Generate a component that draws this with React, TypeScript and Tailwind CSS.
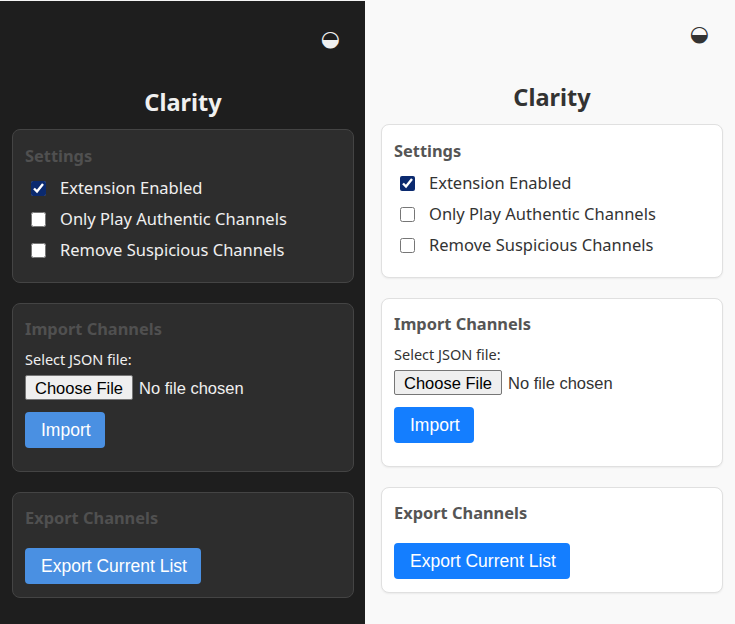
const themes = {
  dark: {
    page: 'bg-[#1e1e1e] pt-[24px] w-[365px] pl-[12px] pr-[11px] border-t border-[#f5f5f5]',
    icon: 'text-[#f0f0f0]',
    title: 'text-[#f0f0f0]',
    card: 'bg-[#2d2d2d] border-[#444444]',
    heading: 'text-[#505050]',
    text: 'text-[#f0f0f0]',
    button: 'bg-[#4a90e2]',
  },
  light: {
    page: 'bg-[#f9f9f9] pt-[20px] flex-1 pl-[16px] pr-[12px]',
    icon: 'text-[#333333]',
    title: 'text-[#333333]',
    card: 'bg-white border-[#e0e0e0] shadow-[0_1px_2px_rgba(0,0,0,0.06)]',
    heading: 'text-[#555555]',
    text: 'text-[#333333]',
    button: 'bg-[#147eff]',
  },
};

const settings = [
  { label: 'Extension Enabled', checked: true },
  { label: 'Only Play Authentic Channels', checked: false },
  { label: 'Remove Suspicious Channels', checked: false },
];

const Panel = ({ mode }: { mode: 'dark' | 'light' }) => {
  const t = themes[mode];
  const card = `rounded-lg border px-3 ${t.card}`;
  const heading = `text-[16.4px] leading-[24px] font-bold font-['Noto_Sans',sans-serif] ${t.heading}`;
  const button = `block h-[36px] rounded-[4px] pl-4 pr-[14px] text-[17.5px] text-white font-['Liberation_Sans',sans-serif] ${t.button}`;

  return (
    <div className={t.page}>
      <div className="flex justify-end pr-[14px] h-[28px] items-center">
        <span className={`text-[22px] leading-none font-['DejaVu_Sans',sans-serif] ${t.icon}`}>◒</span>
      </div>
      <h1 className={`mt-[31px] text-center text-[23.5px] leading-[36px] font-bold font-['Noto_Sans',sans-serif] ${t.title}`}>
        Clarity
      </h1>
      <div className={`mt-[9px] h-[154px] pt-[14px] ${card}`}>
        <h2 className={heading}>Settings</h2>
        <div className="mt-[5px]">
          {settings.map((s) => (
            <label key={s.label} className="flex h-[31px] items-center">
              <input type="checkbox" defaultChecked={s.checked} className="ml-[6px] mr-[14px] h-[15px] w-[15px] accent-[#0b2a6f]" />
              <span className={`text-[16.5px] font-['Noto_Sans',sans-serif] ${t.text}`}>{s.label}</span>
            </label>
          ))}
        </div>
      </div>
      <div className={`mt-[20px] h-[169px] pt-[13px] ${card}`}>
        <h2 className={heading}>Import Channels</h2>
        <div className={`mt-[8px] text-[14.5px] leading-[20px] font-['Noto_Sans',sans-serif] ${t.text}`}>Select JSON file:</div>
        <input
          type="file"
          className={`mt-[6px] block h-[25px] text-[16.5px] leading-[25px] font-['Liberation_Sans',sans-serif] ${t.text} file:mr-[6px] file:h-[25px] file:rounded-[2px] file:border file:border-[#767676] file:bg-[#efefef] file:px-[9px] file:text-black`}
        />
        <button className={`mt-[12px] ${button}`}>Import</button>
      </div>
      <div className={`mt-[20px] h-[106px] pt-[13px] ${card}`}>
        <h2 className={heading}>Export Channels</h2>
        <button className={`mt-[18px] ${button}`}>Export Current List</button>
      </div>
    </div>
  );
};

export default function App() {
  return (
    <div className="flex min-h-screen w-[735px] items-stretch">
      <Panel mode="dark" />
      <Panel mode="light" />
    </div>
  );
}
